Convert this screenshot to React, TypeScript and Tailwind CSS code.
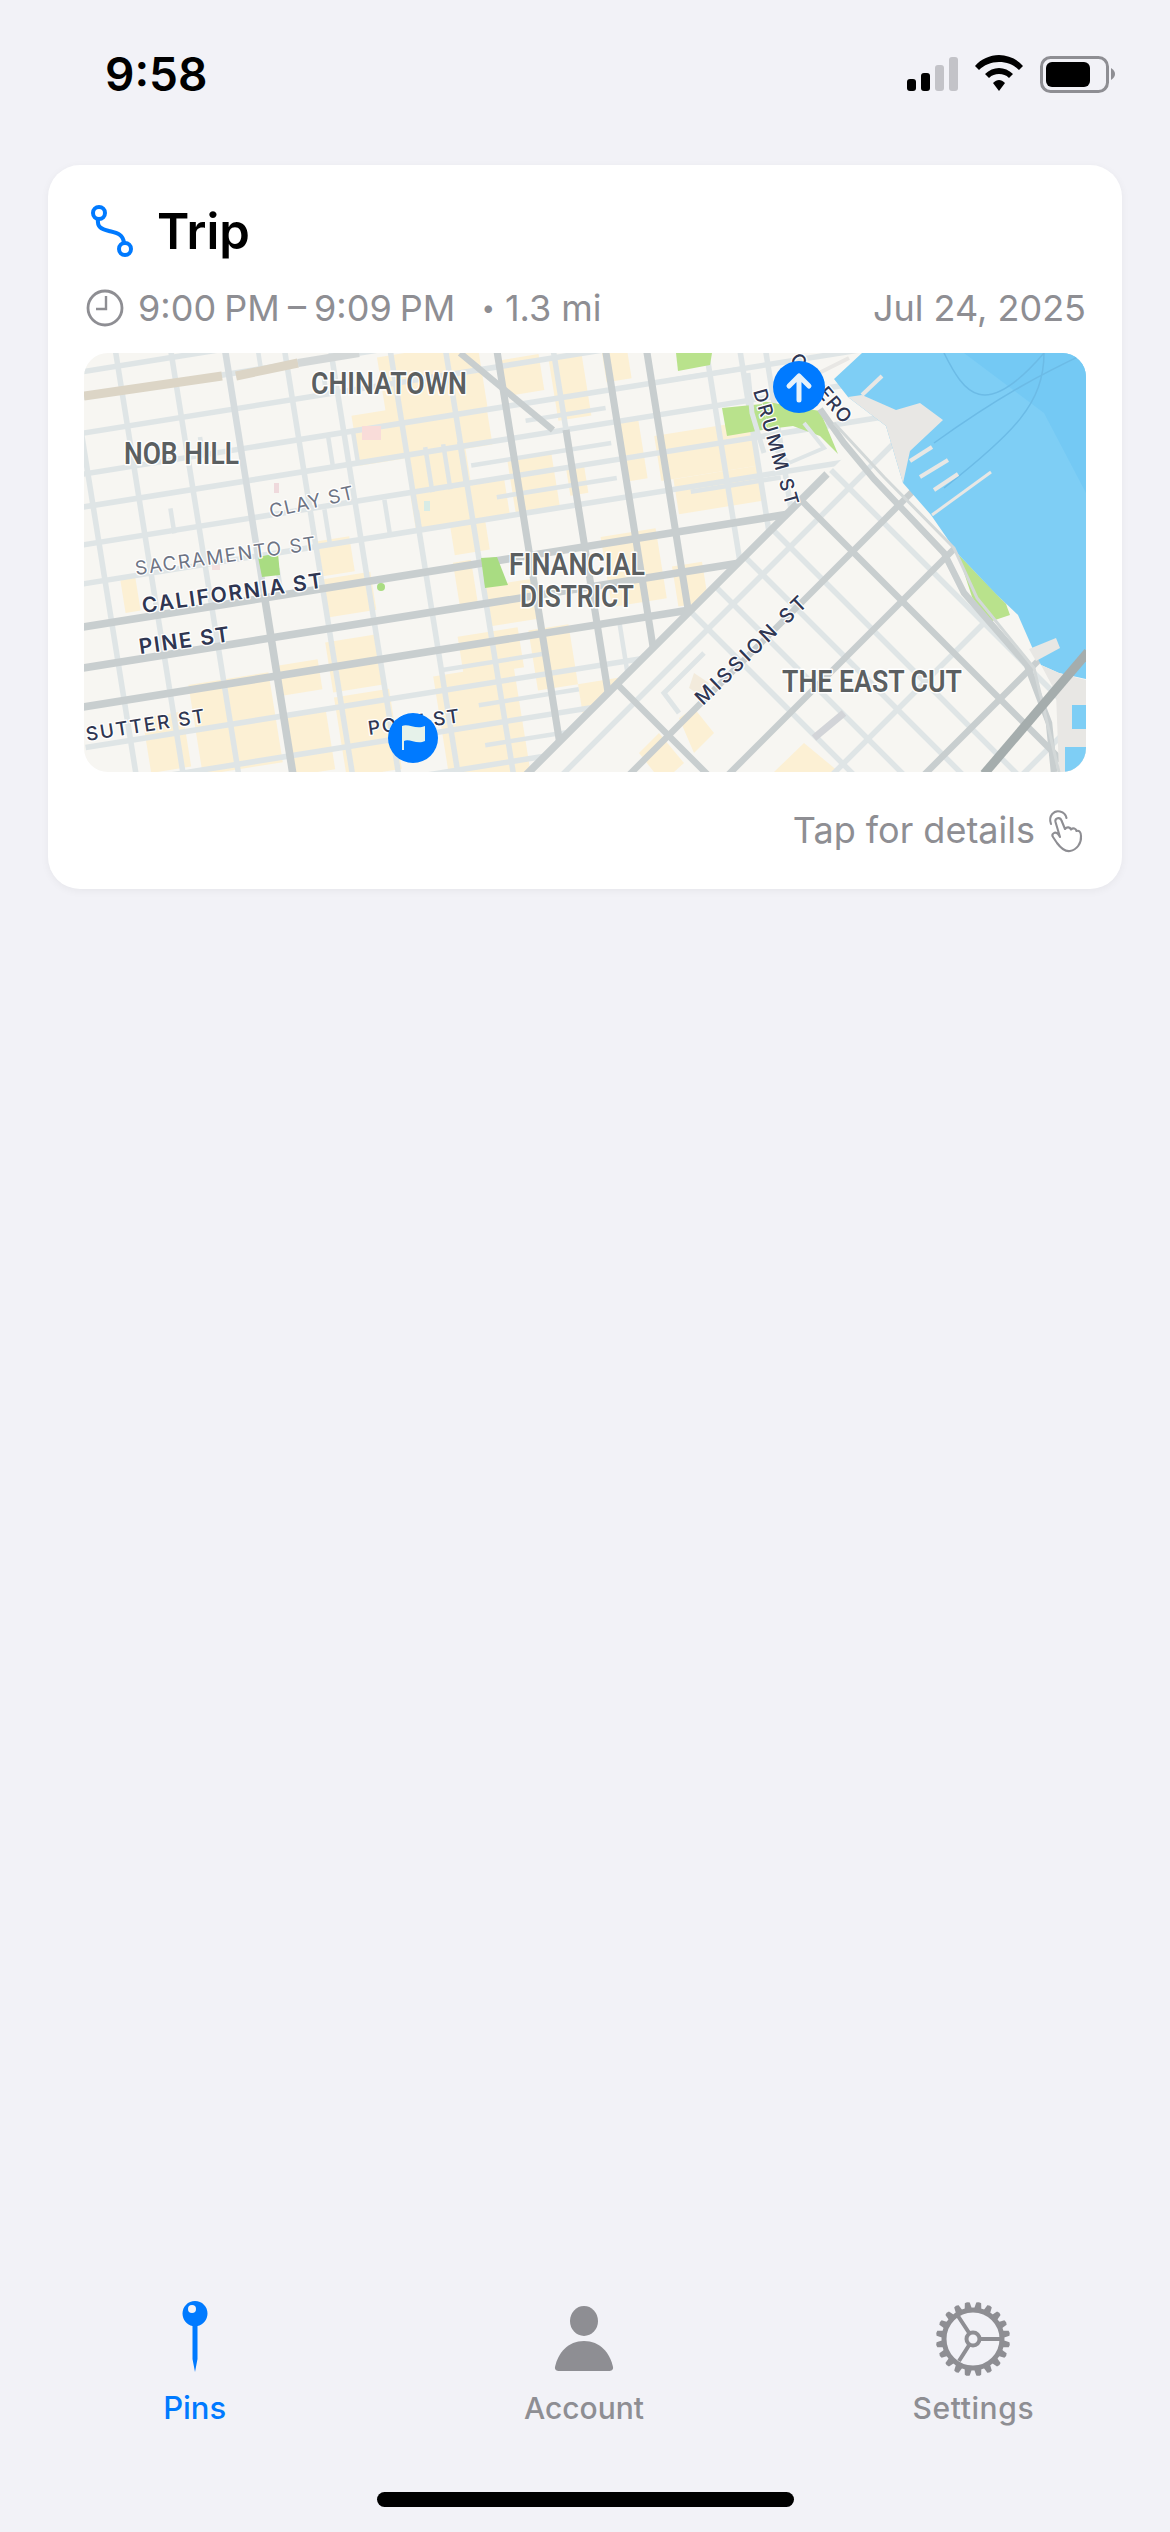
const font = { fontFamily: "Inter, 'Liberation Sans', sans-serif" };

const columnsLight = [-15, 31, 85, 196, 241, 299, 353, 607, 640, 665];
const columnsMajor = [403, 509, 549];
const rowsLight = [-22, 18, 43, 78, 118, 150, 187, 225, 385, 425, 465, 505];
const rowsMajor = [267, 307, 345];

const alleys: [number, number, number, number][] = [
  [318, 145, 318, 190], [336, 145, 336, 190], [352, 145, 352, 190],
  [360, 170, 500, 170], [380, 205, 500, 205], [420, 135, 500, 135],
  [155, 240, 155, 262], [60, 165, 60, 190], [250, 120, 250, 150], [225, 120, 225, 150],
  [210, 190, 210, 225], [300, 205, 300, 225], [270, 190, 270, 225], [230, 60, 230, 78],
  [565, 118, 640, 118], [570, 230, 660, 230], [300, 365, 400, 365], [330, 405, 430, 405],
  [330, 445, 430, 445], [100, 100, 100, 118], [170, 0, 170, 43], [480, 345, 480, 425],
];

const yellow: [number, number, number, number][] = [
  [285, 50, 100, 65], [400, 72, 43, 36], [452, 80, 33, 60], [505, 80, 25, 30], [251, 103, 133, 50],
  [297, 150, 60, 38], [296, 185, 94, 40], [396, 170, 44, 55], [452, 185, 18, 30], [543, 170, 97, 45],
  [555, 215, 85, 35], [507, 150, 23, 60], [330, 220, 35, 35], [195, 220, 35, 35], [198, 258, 47, 38],
  [327, 262, 18, 43], [540, 300, 30, 40], [475, 260, 55, 70], [351, 290, 49, 40], [390, 340, 40, 60],
  [320, 335, 60, 40], [190, 320, 50, 50], [135, 335, 45, 30], [290, 370, 80, 110], [190, 375, 55, 80],
  [135, 385, 45, 60], [50, 340, 80, 90], [0, 365, 40, 55], [0, 225, 15, 35], [430, 400, 40, 60],
];

function line(key: string, x1: number, y1: number, x2: number, y2: number, stroke: string, w: number) {
  return <line key={key} x1={x1} y1={y1} x2={x2} y2={y2} stroke={stroke} strokeWidth={w} />;
}

const LIGHT = "#dfe5e6";
const MAJOR = "#c8cecf";
const halo = { paintOrder: "stroke" as const, stroke: "#ffffff", strokeWidth: 3, strokeLinejoin: "round" as const };

function Area({ x, y, w, children }: { x: number; y: number; w: number; children: string }) {
  return (
    <text x={x} y={y} textLength={w} lengthAdjust="spacingAndGlyphs" fontSize={32} fontWeight={600} fill="#5b5f61" style={{ ...halo, fontFamily: "Roboto, sans-serif" }}>
      {children}
    </text>
  );
}

function Street({ x, y, r, w, size, weight, fill, children }: { x: number; y: number; r: number; w: number; size: number; weight: number; fill: string; children: string }) {
  return (
    <text x={x} y={y} transform={`rotate(${r} ${x} ${y})`} textLength={w} fontSize={size} fontWeight={weight} fill={fill} style={{ ...halo, strokeWidth: 2.5, fontFamily: "Inter, sans-serif" }}>
      {children}
    </text>
  );
}

function MapView() {
  const sLight = [900, 1170, 1360];
  const sMajor = [967, 1066, 1262];
  const dLight = [348, 398, 457, 512, 630];
  const dMajor = [202, 570];
  return (
    <svg viewBox="0 0 1002 419" className="block h-full w-full">
      <defs>
        <clipPath id="west"><polygon points="0,0 864,0 0,864" /></clipPath>
        <clipPath id="east"><polygon points="864,0 1002,0 1002,419 445,419" /></clipPath>
      </defs>
      <rect width="1002" height="419" fill="#f7f6f2" />
      <g clipPath="url(#west)">
        <g transform="matrix(1 -0.16 0.16 1 0 0)">
          {yellow.map(([x, y, w, h], i) => (
            <rect key={i} x={x} y={y} width={w} height={h} fill="#fcf0d4" />
          ))}
          {alleys.map(([a, b, c, d], i) => line(`a${i}`, a, b, c, d, LIGHT, 4.5))}
          {rowsLight.map((v) => line(`r${v}`, -60, v, 780, v, LIGHT, 5.5))}
          {columnsLight.map((u) => line(`c${u}`, u, -40, u, 560, LIGHT, 5.5))}
          {line("u138a", 138, -40, 138, 267, "#d6dcde", 6.5)}
          {line("u138b", 138, 267, 138, 560, MAJOR, 7.5)}
          {rowsMajor.map((v) => line(`R${v}`, -60, v, 780, v, MAJOR, 7.5))}
          {columnsMajor.map((u) => line(`C${u}`, u, -40, u, 560, MAJOR, 7))}
          {line("u458", 458, 150, 458, 560, MAJOR, 7)}
          {line("u458b", 458, 20, 458, 150, LIGHT, 5.5)}
        </g>
        <polyline points="0,43 138,23" stroke="#dcd5c6" strokeWidth="9" fill="none" />
        <polyline points="152,23 214,10" stroke="#dcd5c6" strokeWidth="9" fill="none" />
        <polyline points="214,10 275,0" stroke="#d4d8d8" strokeWidth="8" fill="none" />
        <polyline points="376,0 469,77" stroke={MAJOR} strokeWidth="6.5" fill="none" />
        <rect x="278" y="73" width="19" height="14" fill="#f9dcd9" />
        <rect x="190" y="130" width="5" height="10" fill="#efd9dc" />
        <rect x="128" y="212" width="8" height="5" fill="#f3dfdf" />
        <rect x="340" y="148" width="6" height="10" fill="#d8ece6" />
      </g>
      <g clipPath="url(#east)">
        <polygon points="690,419 720,390 755,419" fill="#fcf0d4" />
        <polygon points="555,400 575,380 600,410 590,419 570,419" fill="#fcf0d4" />
        <polygon points="595,365 610,355 630,380 610,400" fill="#fcf0d4" />
        <polygon points="610,320 625,330 620,345 605,335" fill="#f3ebdc" />
        {sLight.map((s) => line(`s${s}`, s + 20, -20, s - 450, 450, LIGHT, 5.5))}
        {dLight.map((d) => line(`d${d}`, d - 20, -20, d + 450, 450, LIGHT, 5.5))}
        {sMajor.map((s) => line(`S${s}`, s + 20, -20, s - 450, 450, MAJOR, 6.5))}
        {dMajor.map((d) => line(`D${d}`, d - 20, -20, d + 450, 450, MAJOR, 6.5))}
        <polyline points="620,300 580,340 595,360" stroke={LIGHT} strokeWidth="5" fill="none" />
        <polyline points="760,360 730,385" stroke="#d2d4d8" strokeWidth="7" fill="none" />
      </g>
      {line("market", 428, 436, 743, 121, MAJOR, 7.5)}
      <polygon points="592,0 628,0 626,12 594,18" fill="#b9e28c" />
      <polygon points="638,55 678,51 685,76 643,83" fill="#b9e28c" />
      <polygon points="678,48 736,58 754,101 736,83 709,73 685,76" fill="#b9e28c" />
      <polygon points="397,205 413,204 424,232 401,235" fill="#a9dc82" />
      <polygon points="174,204 194,200 196,222 178,224" fill="#a9dc82" />
      <circle cx="297" cy="234" r="4" fill="#a9dc82" />
      <polygon points="874,201 922,251 926,262 905,269 888,244" fill="#b9e28c" />
      <polyline points="664,20 668,60 680,100" stroke={LIGHT} strokeWidth="5" fill="none" />
      <polyline points="720,70 740,95 705,110 690,95" stroke={LIGHT} strokeWidth="4" fill="none" />

      <polygon points="750,26 778,0 1002,0 1002,326 975,320 957,312 948,294 934,262 912,241 874,201 847,162 819,130 802,73 764,44" fill="#7ecef5" />
      <polygon points="880,0 1002,0 1002,140 960,60" fill="#74c9f4" />
      <path d="M860 0 C 880 40, 900 70, 960 0 M850 90 C 920 40, 960 20, 1002 0 M860 135 C 930 80, 960 50, 960 0" stroke="#6cbbe6" strokeWidth="1.5" fill="none" />
      <polygon points="764,44 778,42 812,57 836,50 859,67 826,98 819,130 802,73" fill="#e8e7e4" />
      <polyline points="826,108 848,94" stroke="#e8e7e4" strokeWidth="4" />
      <polyline points="836,124 864,107" stroke="#e8e7e4" strokeWidth="4" />
      <polyline points="850,137 874,121" stroke="#e8e7e4" strokeWidth="4" />
      <polyline points="848,162 907,119" stroke="#e8e7e4" strokeWidth="3" />
      <polyline points="778,42 798,23" stroke="#e8e7e4" strokeWidth="4" />
      <polyline points="735,20 765,5" stroke="#e8e7e4" strokeWidth="4" />
      <polygon points="945,296 972,285 976,295 952,308" fill="#e8e7e4" />
      <polygon points="957,312 975,320 1002,327 1002,419 975,419 972,340" fill="#e8e7e4" />
      <rect x="988" y="352" width="14" height="24" fill="#7ecef5" />
      <rect x="981" y="394" width="21" height="25" fill="#7ecef5" />
      <polyline points="736,56 760,90 790,126 860,200 880,240 943,312 965,370 970,419" stroke={MAJOR} strokeWidth="6.5" fill="none" />
      <polyline points="750,70 800,124 870,195 893,245 950,315 975,419" stroke="#d3d8d8" strokeWidth="3" fill="none" />
      <line x1="900" y1="421" x2="1004" y2="299" stroke="#a5adad" strokeWidth="9" />

      <Area x={227} y={41} w={156}>CHINATOWN</Area>
      <Area x={40} y={111} w={115}>NOB HILL</Area>
      <Area x={425} y={222} w={136}>FINANCIAL</Area>
      <Area x={436} y={254} w={114}>DISTRICT</Area>
      <Area x={698} y={339} w={180}>THE EAST CUT</Area>
      <Street x={187} y={165} r={-13} w={86} size={19} weight={400} fill="#6e7484">CLAY ST</Street>
      <Street x={52} y={222} r={-8} w={182} size={19} weight={400} fill="#6e7484">SACRAMENTO ST</Street>
      <Street x={59} y={260} r={-8} w={182} size={21} weight={600} fill="#2f3652">CALIFORNIA ST</Street>
      <Street x={56} y={301} r={-8} w={91} size={21} weight={600} fill="#2f3652">PINE ST</Street>
      <Street x={3} y={388} r={-9} w={120} size={19} weight={500} fill="#2f3652">SUTTER ST</Street>
      <Street x={285} y={382} r={-8} w={92} size={19} weight={500} fill="#2f3652">POST ST</Street>
      <Street x={619} y={353} r={-44} w={146} size={20} weight={500} fill="#2f3652">MISSION ST</Street>
      <Street x={669} y={38} r={74} w={120} size={19} weight={500} fill="#2f3652">DRUMM ST</Street>
      <Street x={705} y={7} r={50} w={84} size={19} weight={500} fill="#2f3652">CADERO</Street>

      <circle cx="715" cy="34" r="26" fill="#007aff" />
      <path d="M715 47 V25 M705 33 L715 23 L725 33" stroke="#e6f2fb" strokeWidth="5" strokeLinecap="round" strokeLinejoin="round" fill="none" />
      <circle cx="329" cy="385" r="25" fill="#007aff" />
      <path d="M318 373 C 324 370, 332 377, 341 373 V 388 C 333 392, 325 385, 320 388 V 397 H 318 Z" fill="#e6f2ea" />
    </svg>
  );
}

function Gear() {
  const cx = 40;
  const cy = 40;
  const teeth = Array.from({ length: 20 }, (_, i) => 9 + i * 18);
  return (
    <svg width="80" height="80" viewBox="0 0 80 80" fill="none">
      {teeth.map((a) => (
        <path key={a} d="M36 12 L37.5 3.5 Q40 2 42.5 3.5 L44 12 Z" fill="#8e8e93" transform={`rotate(${a} ${cx} ${cy})`} />
      ))}
      <circle cx={cx} cy={cy} r={29} stroke="#8e8e93" strokeWidth={5} />
      <circle cx={cx} cy={cy} r={6.5} stroke="#8e8e93" strokeWidth={4} />
      <path d="M46 40 H68 M36.5 34.5 L25 17 M36.5 45.5 L26 62" stroke="#8e8e93" strokeWidth={4} />
    </svg>
  );
}

export default function App() {
  return (
    <div className="relative flex h-[2532px] w-[1170px] flex-col bg-[#f2f2f7]" style={font}>
      <div className="flex h-[165px] shrink-0 items-start justify-between pl-[105px] pr-[55px] pt-[47px]">
        <span className="text-[46px] font-semibold leading-[54px] text-black">9:58</span>
        <svg width="210" height="40" viewBox="905 55 210 40" className="mt-[8px]">
          <rect x="907" y="79" width="9" height="12" rx="3" fill="#000" />
          <rect x="921" y="73" width="9" height="18" rx="3" fill="#000" />
          <rect x="935" y="65" width="9" height="26" rx="3" fill="#c3c3c8" />
          <rect x="949" y="57" width="9" height="34" rx="3" fill="#c3c3c8" />
          <path d="M999 55 C 1008 55, 1017 59, 1023 66 L 1019 70 C 1014 65, 1007 62, 999 62 C 991 62, 984 65, 979 70 L 975 66 C 981 59, 990 55, 999 55 Z" fill="#000" />
          <path d="M999 68 C 1004 68, 1009 70, 1013 74 L 1009 78 C 1006 75, 1003 74, 999 74 C 995 74, 992 75, 989 78 L 985 74 C 989 70, 994 68, 999 68 Z" fill="#000" />
          <path d="M999 80 C 1001 80, 1003 81, 1005 83 L 999 91 L 993 83 C 995 81, 997 80, 999 80 Z" fill="#000" />
          <rect x="1041.5" y="57.5" width="66" height="34" rx="9" fill="none" stroke="#8e8e93" strokeWidth="3" />
          <rect x="1046" y="62" width="44" height="25" rx="6" fill="#000" />
          <path d="M1111 68 C 1114 70, 1115 72, 1115 74 C 1115 76, 1114 78, 1111 80 Z" fill="#8e8e93" />
        </svg>
      </div>

      <section className="mx-[48px] flex h-[724px] shrink-0 flex-col rounded-[32px] bg-white px-[36px] shadow-[0_2px_8px_rgba(0,0,0,0.05)]">
        <div className="mt-[36px] flex h-[62px] shrink-0 items-center">
          <svg width="50" height="62" viewBox="0 0 50 62" fill="none" className="ml-[1px] -mt-[2px] shrink-0">
            <circle cx="14" cy="13" r="6" stroke="#007aff" strokeWidth="4" />
            <circle cx="40" cy="49" r="6" stroke="#007aff" strokeWidth="4" />
            <path d="M13 19 C 12 27, 16 29, 24 31 C 32 33, 38 34, 39 43" stroke="#007aff" strokeWidth="4" />
          </svg>
          <span className="ml-[22px] text-[49px] font-semibold leading-[62px] text-black">Trip</span>
        </div>
        <div className="mt-[23px] flex h-[44px] shrink-0 items-center text-[36px] leading-[44px] text-[#8e8e93]">
          <svg width="38" height="38" viewBox="0 0 38 38" fill="none" className="ml-[2px] mr-[14px] shrink-0">
            <circle cx="19" cy="19" r="17" stroke="#8e8e93" strokeWidth="2.8" />
            <path d="M20 7 V20 H10" stroke="#8e8e93" strokeWidth="2.4" />
          </svg>
          <span className="[word-spacing:-2px]">9:00 PM – 9:09 PM</span>
          <span className="ml-[26px] text-[24px]">•</span>
          <span className="ml-[10px]">1.3 mi</span>
          <span className="ml-auto">Jul 24, 2025</span>
        </div>
        <div className="mt-[23px] h-[419px] shrink-0 overflow-hidden rounded-[24px]">
          <MapView />
        </div>
        <div className="mt-[36px] flex items-center justify-end text-[36px] leading-[44px] text-[#8e8e93]">
          <span>Tap for details</span>
          <svg width="50" height="60" viewBox="0 0 50 60" fill="none" stroke="#8e8e93" strokeWidth="2.1" strokeLinejoin="round" strokeLinecap="round" className="-mr-[4px] ml-[5px] -my-[8px] shrink-0">
            <path d="M20 37 L15.5 22 C14.5 18 20 16.5 21.5 20.5 L25 29 C27 26.5 30 27 31 29.5 C33 27.5 36 28.5 36.5 31 C39 30 41 32 41 36 C41.5 43 37 50 30 51 C24 52 20 47 17 43 L13 37 C11 34 15 31 18 34 Z" />
            <path d="M11 24 C8 16 14 10 20 11.5 C24 12.5 26 15 26.5 18" />
          </svg>
        </div>
      </section>

      <div className="mt-auto flex shrink-0 flex-col items-center">
        <nav className="grid w-full grid-cols-3 pr-[2px]">
          <div className="flex flex-col items-center text-[#007aff]">
            <svg width="40" height="76" viewBox="0 0 40 76">
              <path d="M20 2 C 27 2, 32.5 7.5, 32.5 14.5 C 32.5 21, 28 26, 22.5 27 V 60 L 20 73 L 17.5 60 V 27 C 12 26, 7.5 21, 7.5 14.5 C 7.5 7.5, 13 2, 20 2 Z" fill="#007aff" />
              <circle cx="17" cy="10" r="4" fill="#f2f2f7" />
            </svg>
            <span className="mt-[14px] text-[31px] font-medium leading-[38px]">Pins</span>
          </div>
          <div className="flex flex-col items-center text-[#8e8e93]">
            <svg width="60" height="76" viewBox="0 0 60 76">
              <ellipse cx="30" cy="22" rx="14" ry="15" fill="#8e8e93" />
              <path d="M30 42 C 46 42, 56 54, 59 68 C 59.5 71, 57 72, 55 72 H 5 C 3 72, 0.5 71, 1 68 C 4 54, 14 42, 30 42 Z" fill="#8e8e93" />
            </svg>
            <span className="mt-[14px] text-[30px] font-medium leading-[38px]">Account</span>
          </div>
          <div className="flex flex-col items-center text-[#8e8e93]">
            <div className="h-[76px] w-[80px]"><Gear /></div>
            <span className="mt-[14px] text-[30px] font-medium leading-[38px] tracking-[0.6px]">Settings</span>
          </div>
        </nav>
        <div className="mb-[25px] mt-[65px] h-[15px] w-[417px] rounded-full bg-black" />
      </div>
    </div>
  );
}
